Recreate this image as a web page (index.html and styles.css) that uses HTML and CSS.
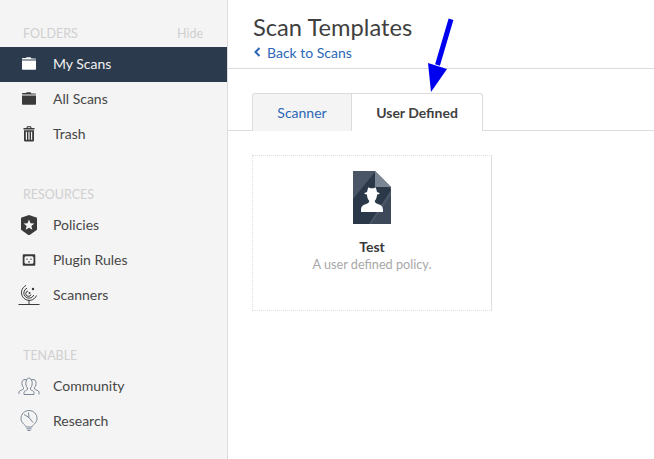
FILE: index.html
```html
<!DOCTYPE html>
<html lang="en">
<head>
<meta charset="utf-8">
<title>Scan Templates</title>
<link rel="stylesheet" href="styles.css">
</head>
<body>
<div class="app">
  <aside class="sidebar">
    <section class="group">
      <div class="group-head"><span>FOLDERS</span><span>Hide</span></div>
      <a class="item active">
        <svg class="icon" viewBox="0 0 20 20"><path class="fill" d="M3 5.600V4.800C3 4.300 3.300 4 3.800 4H6.800L7.800 3.200H11.500L12.500 4.600H16.200C16.700 4.600 17 4.900 17 5.400V5.600Z"/><path class="fill" d="M3 6.400H17V15C17 15.500 16.700 15.800 16.200 15.800H3.800C3.300 15.800 3 15.500 3 15Z"/></svg>
        <span>My Scans</span>
      </a>
      <a class="item">
        <svg class="icon" viewBox="0 0 20 20"><path class="fill" d="M3 5.600V4.800C3 4.300 3.300 4 3.800 4H6.800L7.800 3.200H11.500L12.500 4.600H16.200C16.700 4.600 17 4.900 17 5.400V5.600Z"/><path class="fill" d="M3 6.400H17V15C17 15.500 16.700 15.800 16.200 15.800H3.800C3.300 15.800 3 15.500 3 15Z"/></svg>
        <span>All Scans</span>
      </a>
      <a class="item">
        <svg class="icon" viewBox="0 0 20 20"><path class="fill" fill-rule="evenodd" d="M8 2.200H12L12.600 4H15.500V5.500H4.500V4H7.400ZM8.800 3.200L8.500 4H11.500L11.200 3.200ZM5 6.300H15V16.500C15 17 14.600 17.400 14 17.400H6C5.400 17.400 5 17 5 16.500ZM6.800 7.800V15.800H8V7.800ZM9.400 7.800V15.800H10.600V7.800ZM12 7.800V15.800H13.200V7.800Z"/></svg>
        <span>Trash</span>
      </a>
    </section>
    <section class="group">
      <div class="group-head"><span>RESOURCES</span></div>
      <a class="item">
        <svg class="icon" viewBox="0 0 20 20"><path class="fill" fill-rule="evenodd" d="M10 0L18 2.800V14.700L10 20.500L2 14.700V2.800ZM10 4.500L8.500 8.200L4.600 8.500L7.600 11L6.700 14.800L10 12.800L13.300 14.800L12.400 11L15.400 8.500L11.500 8.200Z"/></svg>
        <span>Policies</span>
      </a>
      <a class="item">
        <svg class="icon" viewBox="0 0 20 20"><path class="fill" fill-rule="evenodd" d="M4.800 4.200H15.200C15.800 4.200 16.300 4.700 16.300 5.300V14.700C16.300 15.300 15.800 15.800 15.200 15.800H4.800C4.200 15.800 3.700 15.300 3.700 14.700V5.300C3.700 4.700 4.200 4.200 4.800 4.200ZM7 6.200C6 6.200 5.500 7 5.500 8V12C5.500 13 6 13.800 7 13.800H13C14 13.800 14.500 13 14.500 12V8C14.500 7 14 6.200 13 6.200ZM7.500 8.500H8.500V10H7.500ZM11.500 8.500H12.500V10H11.500ZM9.200 11.200H10.800V12.500H9.200Z"/></svg>
        <span>Plugin Rules</span>
      </a>
      <a class="item">
        <svg class="icon icon-wide" viewBox="0 0 22 22"><g class="line"><path d="M8 1.500A7.800 7.800 0 1 0 18.500 11.500"/><path d="M9 4.200A5.200 5.200 0 1 0 15.800 11"/><path d="M10 7A2.700 2.700 0 1 0 13 10.500"/><path d="M11 16V20.500M0.500 20.500H21.500"/></g><circle class="fill" cx="15" cy="5" r="1.200"/><circle class="fill" cx="11.500" cy="9" r="1"/></svg>
        <span>Scanners</span>
      </a>
    </section>
    <section class="group">
      <div class="group-head"><span>TENABLE</span></div>
      <a class="item">
        <svg class="icon icon-wide" viewBox="0 0 22 22"><g class="line-soft"><path d="M1 19V17C1 15.500 4.500 15 5.500 14V12.500C4 11 3.800 9 4 7.300C4.300 5.500 5.500 4.500 7 4.500C7.800 4.500 8.500 4.800 9 5.300"/><path d="M21 19.500V17C21 15.500 17.500 15 16.500 14V12.500C18 11 18.200 9 18 7.300C17.700 5.500 16.500 4.500 15 4.500C14.200 4.500 13.500 4.800 13 5.300"/><path d="M6 19.500V17.500C6 15.500 9 15.500 9.500 14.500V13C8 11.500 7.500 9 8 6.500C8.500 4.300 9.800 3 11 3C12.200 3 13.500 4.300 14 6.500C14.500 9 14 11.500 12.500 13V14.500C13 15.500 16 15.500 16 17.500V19.500Z"/></g></svg>
        <span>Community</span>
      </a>
      <a class="item">
        <svg class="icon icon-wide" viewBox="0 0 22 22"><g class="line-soft"><path d="M8 17C8 15 3 13.500 3 8.500C3 4 6.500 .5 11 .5C15.500 .5 19 4 19 8.500C19 13.500 14 15 14 17Z"/><path d="M8.500 18.800H13.500M9.500 20.500H12.500"/><path d="M6 4.500L11 7.500L15 12.500M11 7.500L10.500 2.500"/></g></svg>
        <span>Research</span>
      </a>
    </section>
  </aside>
  <main class="content">
    <header class="page-head">
      <h1>Scan Templates</h1>
      <a class="back"><svg class="chevron" viewBox="0 0 8 10"><path d="M6.500 1L2.500 5L6.500 9"/></svg>Back to Scans</a>
    </header>
    <nav class="tabs">
      <a class="tab">Scanner</a>
      <a class="tab current">User Defined</a>
    </nav>
    <article class="card">
      <svg class="doc" viewBox="0 0 38 53">
        <path fill="#4a5666" d="M0 0H22L38 16V53H0Z"/>
        <path fill="#2b3848" d="M22 1L30 8.500L38 19L16 53H0V28Z"/>
        <path fill="#3d4959" d="M38 24V53H18Z"/>
        <path fill="#7b8694" d="M22 0L38 16H22Z"/>
        <path fill="#fff" d="M14 21L15 17C15.100 16.500 15.800 16.400 16.300 16.700C17.900 17.500 20.100 17.500 21.700 16.700C22.200 16.400 22.900 16.500 23 17L24 21L26.500 22V22.700C25 23.300 24 23.500 24 23.700C24 26.200 23 28.500 21.800 29.700C21.800 31.500 22.800 32.200 25 33C28 34 30 35 30 39.500V41H8V39.500C8 35 10 34 13 33C15.200 32.200 16.200 31.500 16.200 29.700C15 28.500 14 26.200 14 23.700C14 23.500 13 23.300 11.500 22.700V22Z"/>
      </svg>
      <div class="card-title">Test</div>
      <div class="card-desc">A user defined policy.</div>
    </article>
    <svg class="arrow" viewBox="0 0 40 80"><path d="M24 2.300L10.500 48" stroke="#0000f0" stroke-width="5" fill="none"/><path fill="#0000f0" d="M1 46L20 52L4 75Z"/></svg>
  </main>
</div>
</body>
</html>
```
FILE: styles.css
```css
* { box-sizing: border-box; }
html, body { margin: 0; padding: 0; height: 100%; }
body { font-family: "Lato", "Noto Sans", sans-serif; color: #3f3f3f; background: #fff; overflow: hidden; }
.app { display: flex; height: 459px; }
.sidebar { flex: 0 0 228px; background: #f4f4f4; border-right: 1px solid #dcdcdc; padding-top: 19px; }
.group { margin-bottom: 28px; }
.group-head { display: flex; justify-content: space-between; align-items: center; height: 28px; padding: 0 24px 0 23px; font-size: 12.5px; color: #d0d0d0; }
.item { display: flex; align-items: center; height: 35px; padding: 0 0 2px 19px; font-size: 14px; color: #474747; }
.item .icon { width: 20px; height: 20px; margin-right: 14px; flex: none; }
.item .icon-wide { width: 22px; height: 22px; margin-left: -1px; margin-right: 13px; }
.fill { fill: #3a3a3a; }
.line { fill: none; stroke: #3a3a3a; stroke-width: 1; }
.line-soft { fill: none; stroke: #7b8796; stroke-width: 1; }
.item.active { background: #2b3a4c; color: #f2f2f2; }
.item.active .fill { fill: #fff; }
.content { flex: 1; position: relative; min-width: 0; }
.page-head { height: 69px; border-bottom: 1px solid #dcdcdc; padding: 14px 0 0 25px; }
h1 { margin: 0; font-size: 23.7px; font-weight: 400; line-height: 27px; color: #3f3f3f; }
.back { display: flex; align-items: center; height: 22px; font-size: 14px; color: #2a67b8; }
.chevron { width: 8px; height: 10px; margin-right: 6px; fill: none; stroke: #2a67b8; stroke-width: 2; }
.tabs { display: flex; height: 62px; margin-bottom: 24px; padding: 24px 0 0 24px; border-bottom: 1px solid #dcdcdc; }
.tab { display: flex; align-items: center; justify-content: center; height: 38px; font-size: 14px; border: 1px solid #dcdcdc; border-bottom: none; border-radius: 3px 0 0 0; width: 100px; background: #f4f4f4; color: #2a67b8; }
.tab.current { width: 132px; margin-left: -1px; background: #fff; color: #3f3f3f; font-weight: 700; border-radius: 0 3px 0 0; }
.card { width: 240px; height: 156px; margin-left: 24px; border: 1px dotted #dedede; border-right-style: solid; display: flex; flex-direction: column; align-items: center; padding-top: 15px; }
.doc { width: 38px; height: 53px; }
.card-title { margin-top: 14px; font-size: 14px; font-weight: 700; color: #3a3a3a; line-height: 17px; }
.card-desc { margin-top: 1px; font-size: 12.7px; color: #a8a8a8; line-height: 16px; }
.arrow { position: absolute; left: 199px; top: 17px; width: 40px; height: 80px; }
```
